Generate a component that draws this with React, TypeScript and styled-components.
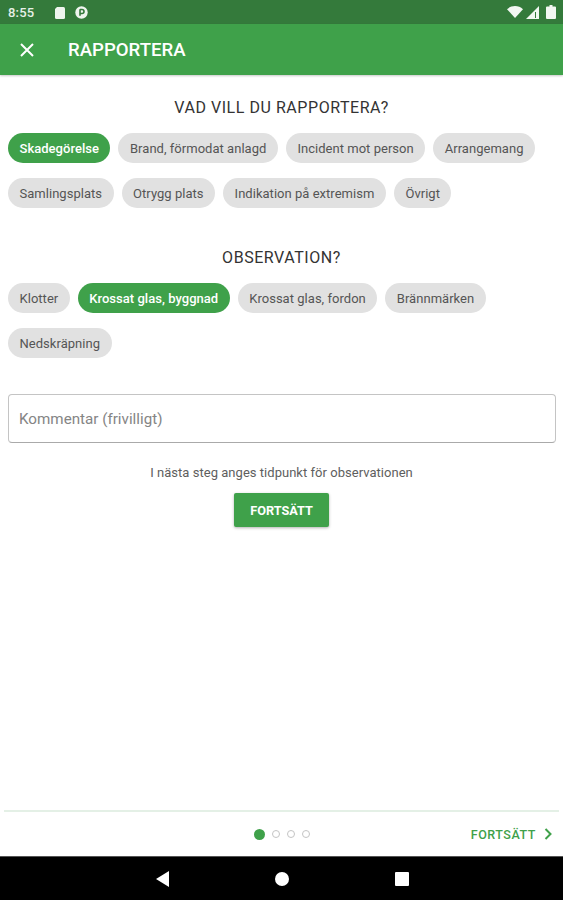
import React from "react";
import styled, { createGlobalStyle } from "styled-components";

const Global = createGlobalStyle`
  html, body { margin: 0; padding: 0; background: #fff; }
  body { font-family: Roboto, "Liberation Sans", sans-serif; }
`;

const Page = styled.div`
  width: 563px;
  height: 900px;
  display: flex;
  flex-direction: column;
  overflow: hidden;
`;

const StatusBar = styled.div`
  height: 24px;
  flex: none;
  background: #347a3b;
  display: flex;
  align-items: center;
  padding: 0 7px 0 8px;
  color: #e6f0e7;
  font-size: 13px;
  font-weight: 500;
`;

const StatusTime = styled.span`
  width: 37px;
  letter-spacing: 0.2px;
`;

const StatusLeft = styled.div`
  display: flex;
  align-items: center;
  gap: 9px;
  flex: 1;
`;

const StatusRight = styled.div`
  display: flex;
  align-items: center;
  gap: 3px;
`;

const AppBar = styled.header`
  height: 51px;
  flex: none;
  background: #3fa14a;
  box-shadow: 0 1px 2px rgba(0, 0, 0, 0.22);
  display: flex;
  align-items: center;
  padding: 0 19px;
  gap: 33px;
  color: #fff;
  position: relative;
`;

const AppTitle = styled.h1`
  margin: 0;
  font-size: 18.6px;
  font-weight: 500;
`;

const Content = styled.main`
  flex: 1;
  display: flex;
  flex-direction: column;
  padding: 0 8px 0 8px;
`;

const Heading = styled.h2<{ $top: number }>`
  margin: ${(p) => p.$top}px 0 0;
  text-align: center;
  font-size: 16px;
  line-height: 20px;
  font-weight: 400;
  color: #333;
  letter-spacing: 0.55px;
`;

const Chips = styled.div`
  display: flex;
  flex-wrap: wrap;
  gap: 15px 8px;
  margin-top: 15px;
`;

const Chip = styled.span<{ $active?: boolean }>`
  height: 30px;
  display: inline-flex;
  align-items: center;
  padding: 0 11.5px;
  border-radius: 15px;
  font-size: 13px;
  letter-spacing: 0.03px;
  background: ${(p) => (p.$active ? "#3fa14a" : "#e1e1e1")};
  color: ${(p) => (p.$active ? "#fff" : "#555")};
  font-weight: ${(p) => (p.$active ? 500 : 400)};
  white-space: nowrap;
`;

const Comment = styled.div`
  margin: 36px -1px 0 0;
  height: 49px;
  box-sizing: border-box;
  border: 1px solid #c4c4c4;
  border-bottom-color: #aaa;
  border-radius: 4px;
  display: flex;
  align-items: center;
  padding: 0 10px;
  font-size: 15.2px;
  color: #858585;
`;

const Hint = styled.p`
  margin: 22px 0 0;
  text-align: center;
  font-size: 13px;
  line-height: 16px;
  letter-spacing: 0.03px;
  color: #5e5e5e;
`;

const Submit = styled.button`
  align-self: center;
  margin-top: 12px;
  width: 95px;
  height: 34px;
  border: 0;
  border-radius: 2px;
  background: #3fa14a;
  color: #fff;
  font-family: inherit;
  font-size: 12.7px;
  font-weight: 700;
  box-shadow: 0 1px 3px rgba(0, 0, 0, 0.3);
`;

const Footer = styled.footer`
  height: 44px;
  flex: none;
  margin: 0 4px;
  border-top: 2px solid #e4f0e6;
  display: grid;
  grid-template-columns: 1fr auto 1fr;
  align-items: center;
`;

const Dots = styled.div`
  grid-column: 2;
  display: flex;
  align-items: center;
  gap: 7px;
`;

const Dot = styled.span<{ $active?: boolean }>`
  box-sizing: border-box;
  width: ${(p) => (p.$active ? 11 : 8)}px;
  height: ${(p) => (p.$active ? 11 : 8)}px;
  border-radius: 50%;
  background: ${(p) => (p.$active ? "#3fa14a" : "#fff")};
  border: ${(p) => (p.$active ? "0" : "1px solid #c4c4c4")};
`;

const NextLink = styled.div`
  grid-column: 3;
  justify-self: end;
  display: flex;
  align-items: center;
  gap: 8px;
  margin-right: 7px;
  color: #3fa14a;
  font-size: 12.5px;
  font-weight: 500;
  letter-spacing: 0.55px;
`;

const NavBar = styled.nav`
  height: 44px;
  flex: none;
  background: #000;
  display: flex;
  align-items: center;
  justify-content: center;
  gap: 106px;
  padding-left: 1px;
  border-top: 1px solid #555;
  box-sizing: border-box;
`;

const first = ["Brand, förmodat anlagd", "Incident mot person", "Arrangemang", "Samlingsplats", "Otrygg plats", "Indikation på extremism", "Övrigt"];
const second = ["Klotter", "Krossat glas, byggnad", "Krossat glas, fordon", "Brännmärken", "Nedskräpning"];

export default function App() {
  return (
    <Page>
      <Global />
      <StatusBar>
        <StatusLeft>
          <StatusTime>8:55</StatusTime>
          <svg width="12" height="13" viewBox="0 0 12 13"><path d="M3 1h6.5A1.5 1.5 0 0 1 11 2.5v9A1.5 1.5 0 0 1 9.5 13h-7A1.5 1.5 0 0 1 1 11.5V3z" fill="#eef5ee" /></svg>
          <svg width="13" height="13" viewBox="0 0 13 13"><circle cx="6.500" cy="6.500" r="6.200" fill="#eef5ee" /><path d="M5 3.200v6.600M5 3.500h2a2 2 0 0 1 0 4H5" fill="none" stroke="#347a3b" strokeWidth="1.600" /></svg>
        </StatusLeft>
        <StatusRight>
          <svg width="16" height="12" viewBox="0 0 16 12"><path d="M0 3.200C4.500-1 11.500-1 16 3.200L8 12z" fill="#f2f7f2" /></svg>
          <svg width="14" height="13" viewBox="0 0 14 13"><path d="M13 0v13H0z" fill="#f2f7f2" /><path d="M9.500 6v6" stroke="#347a3b" strokeWidth="1" /></svg>
          <svg width="10" height="14" viewBox="0 0 10 14" style={{ marginLeft: 3 }}><path d="M3.500 0h3v1.500H9a1 1 0 0 1 1 1V13a1 1 0 0 1-1 1H1a1 1 0 0 1-1-1V2.500a1 1 0 0 1 1-1h2.500z" fill="#f2f7f2" /></svg>
        </StatusRight>
      </StatusBar>
      <AppBar>
        <svg width="16" height="16" viewBox="0 0 16 16"><path d="M2 2l12 12M14 2L2 14" stroke="#fff" strokeWidth="2" fill="none" /></svg>
        <AppTitle>RAPPORTERA</AppTitle>
      </AppBar>
      <Content>
        <Heading $top={23}>VAD VILL DU RAPPORTERA?</Heading>
        <Chips>
          <Chip $active>Skadegörelse</Chip>
          {first.map((t) => <Chip key={t}>{t}</Chip>)}
        </Chips>
        <Heading $top={40}>OBSERVATION?</Heading>
        <Chips>
          {second.map((t, i) => <Chip key={t} $active={i === 1}>{t}</Chip>)}
        </Chips>
        <Comment>Kommentar (frivilligt)</Comment>
        <Hint>I nästa steg anges tidpunkt för observationen</Hint>
        <Submit>FORTSÄTT</Submit>
      </Content>
      <Footer>
        <Dots>
          <Dot $active />
          <Dot />
          <Dot />
          <Dot />
        </Dots>
        <NextLink>
          FORTSÄTT
          <svg width="8" height="12" viewBox="0 0 8 12"><path d="M1.500 1l5 5-5 5" stroke="#3fa14a" strokeWidth="2" fill="none" /></svg>
        </NextLink>
      </Footer>
      <NavBar>
        <svg width="13" height="16" viewBox="0 0 13 16"><path d="M13 0v16L0 8z" fill="#fff" /></svg>
        <svg width="14" height="14" viewBox="0 0 14 14"><circle cx="7" cy="7" r="7" fill="#fff" /></svg>
        <svg width="14" height="14" viewBox="0 0 14 14"><rect width="14" height="14" rx="1" fill="#fff" /></svg>
      </NavBar>
    </Page>
  );
}
